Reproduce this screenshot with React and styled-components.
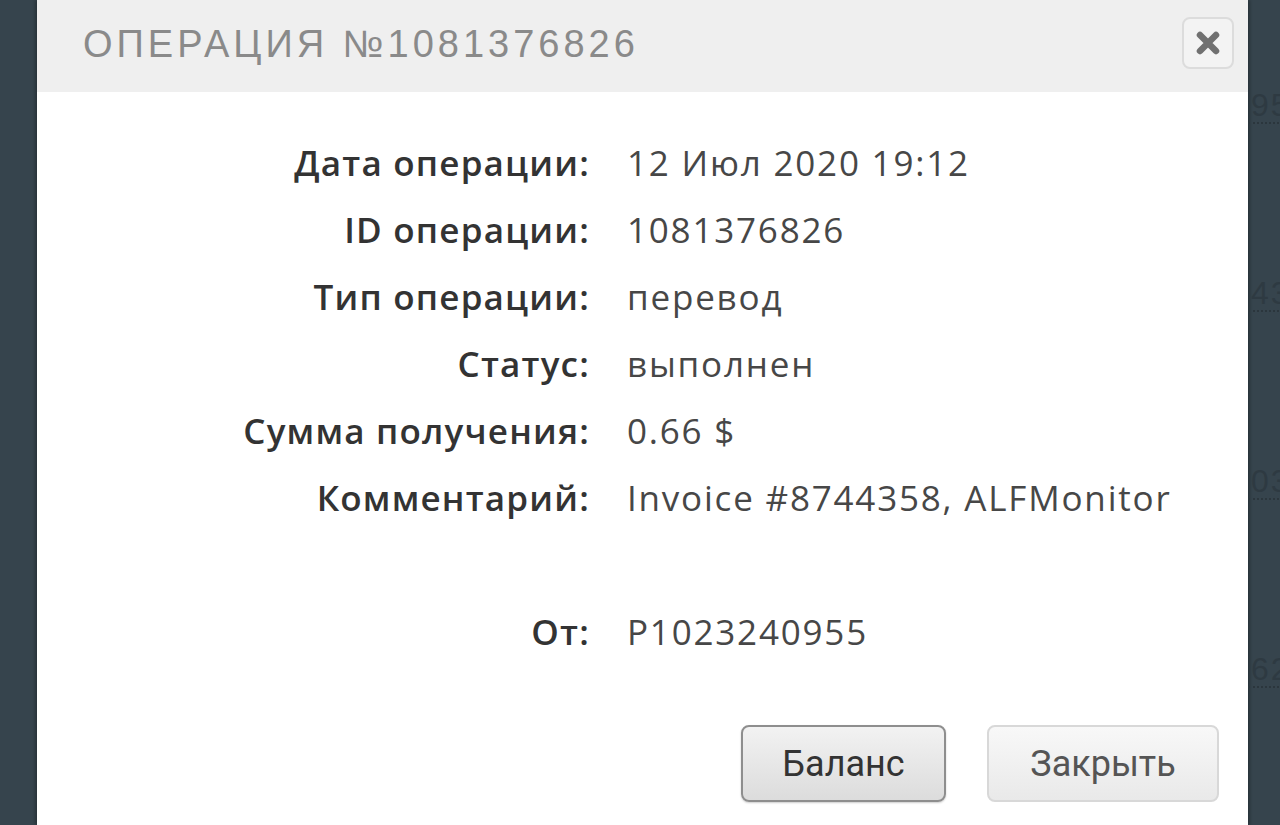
import React from 'react'
import styled, {createGlobalStyle} from 'styled-components'

const GlobalStyle = createGlobalStyle`
    html, body {
        margin: 0;
        padding: 0;
        background: #36444d;
    }
`

const rows = [
    {label: 'Дата операции:', value: '12 Июл 2020 19:12'},
    {label: 'ID операции:', value: '1081376826'},
    {label: 'Тип операции:', value: 'перевод'},
    {label: 'Статус:', value: 'выполнен'},
    {label: 'Сумма получения:', value: '0.66 $'},
    {label: 'Комментарий:', value: 'Invoice #8744358, ALFMonitor'},
    {label: '', value: ''},
    {label: 'От:', value: 'P1023240955'},
]

const ghostNumbers = ['95', '43', '03', '62']

const App = () => {
    return (
        <Page>
            <GlobalStyle/>
            <Side/>
            <Modal>
                <Header>
                    <Title>ОПЕРАЦИЯ №1081376826</Title>
                    <CloseButton aria-label="close">
                        <svg width="26" height="26" viewBox="0 0 26 26">
                            <path d="M5 5 L21 21 M21 5 L5 21" stroke="#707070" strokeWidth="6.5" strokeLinecap="round"/>
                        </svg>
                    </CloseButton>
                </Header>
                <Body>
                    <Details>
                        {rows.map((row, index) => (
                            <React.Fragment key={index}>
                                <Label>{row.label}</Label>
                                <Value>{row.value}</Value>
                            </React.Fragment>
                        ))}
                    </Details>
                    <Actions>
                        <Button primary>Баланс</Button>
                        <Button>Закрыть</Button>
                    </Actions>
                </Body>
            </Modal>
            <BackSide>
                {ghostNumbers.map((text, index) => (
                    <GhostRow key={index}>
                        <Ghost>{text}</Ghost>
                    </GhostRow>
                ))}
            </BackSide>
        </Page>
    )
}

const Page = styled.div`
    display: flex;
    width: 1280px;
    height: 825px;
    overflow: hidden;
    background: #36444d;
`

const Side = styled.div`
    width: 37px;
    flex-shrink: 0;
`

const BackSide = styled.div`
    width: 32px;
    flex-shrink: 0;
    display: flex;
    flex-direction: column;
    padding-top: 6px;
    overflow: hidden;
`

const GhostRow = styled.div`
    height: 188px;
    flex-shrink: 0;
    display: flex;
    flex-direction: column;
    justify-content: center;
    padding-top: 12px;
    box-sizing: border-box;
`

const Ghost = styled.div`
    font-family: "Liberation Sans", sans-serif;
    font-size: 32px;
    line-height: 34px;
    color: #2e3a42;
    padding-left: 3px;
    white-space: nowrap;
    border-bottom: 2px dotted #2b363d;
    width: 60px;
    letter-spacing: 2px;
`

const Modal = styled.div`
    width: 1211px;
    flex-shrink: 0;
    background: #ffffff;
    display: flex;
    flex-direction: column;
    box-shadow: -2px 0 3px rgba(0, 0, 0, 0.25), 2px 0 3px rgba(0, 0, 0, 0.25);
`

const Header = styled.div`
    height: 92px;
    background: #efefef;
    display: flex;
    align-items: center;
    justify-content: space-between;
    padding: 0 14px 0 46px;
    box-sizing: border-box;
`

const Title = styled.h2`
    margin: 0;
    font-family: "Liberation Sans", sans-serif;
    font-weight: 400;
    font-size: 38px;
    letter-spacing: 4px;
    color: #8a8a8a;
    margin-top: -4px;
`

const CloseButton = styled.button`
    width: 52px;
    height: 52px;
    border: 2px solid #dcdcdc;
    border-radius: 8px;
    background: #f3f3f3;
    display: flex;
    align-items: center;
    justify-content: center;
    padding: 0;
    margin-top: -6px;
`

const Body = styled.div`
    display: flex;
    flex-direction: column;
    padding-top: 37px;
`

const Details = styled.div`
    display: grid;
    grid-template-columns: 553px 1fr;
    grid-auto-rows: 67px;
    column-gap: 37px;
    align-items: center;
`

const Label = styled.div`
    text-align: right;
    font-family: "Open Sans", sans-serif;
    font-weight: 600;
    font-size: 35px;
    letter-spacing: 1.2px;
    color: #333333;
`

const Value = styled.div`
    font-family: "Open Sans", sans-serif;
    font-weight: 400;
    font-size: 35px;
    color: #474747;
    letter-spacing: 1.8px;
`

const Actions = styled.div`
    display: flex;
    justify-content: flex-end;
    gap: 41px;
    padding: 60px 29px 0 0;
`

const Button = styled.button`
    height: 77px;
    padding: 0 30px;
    min-width: ${props => props.primary ? '205px' : '232px'};
    border-radius: 8px;
    border: 2px solid ${props => props.primary ? '#8e8e8e' : '#d8d8d8'};
    background: ${props => props.primary
        ? 'linear-gradient(#f2f2f2, #dcdcdc)'
        : 'linear-gradient(#f8f8f8, #e9e9e9)'};
    font-family: Roboto, "Liberation Sans", sans-serif;
    font-size: 36px;
    color: ${props => props.primary ? '#333333' : '#555555'};
    box-shadow: ${props => props.primary ? '0 1px 2px rgba(0,0,0,0.2)' : 'none'};
`

export default App
